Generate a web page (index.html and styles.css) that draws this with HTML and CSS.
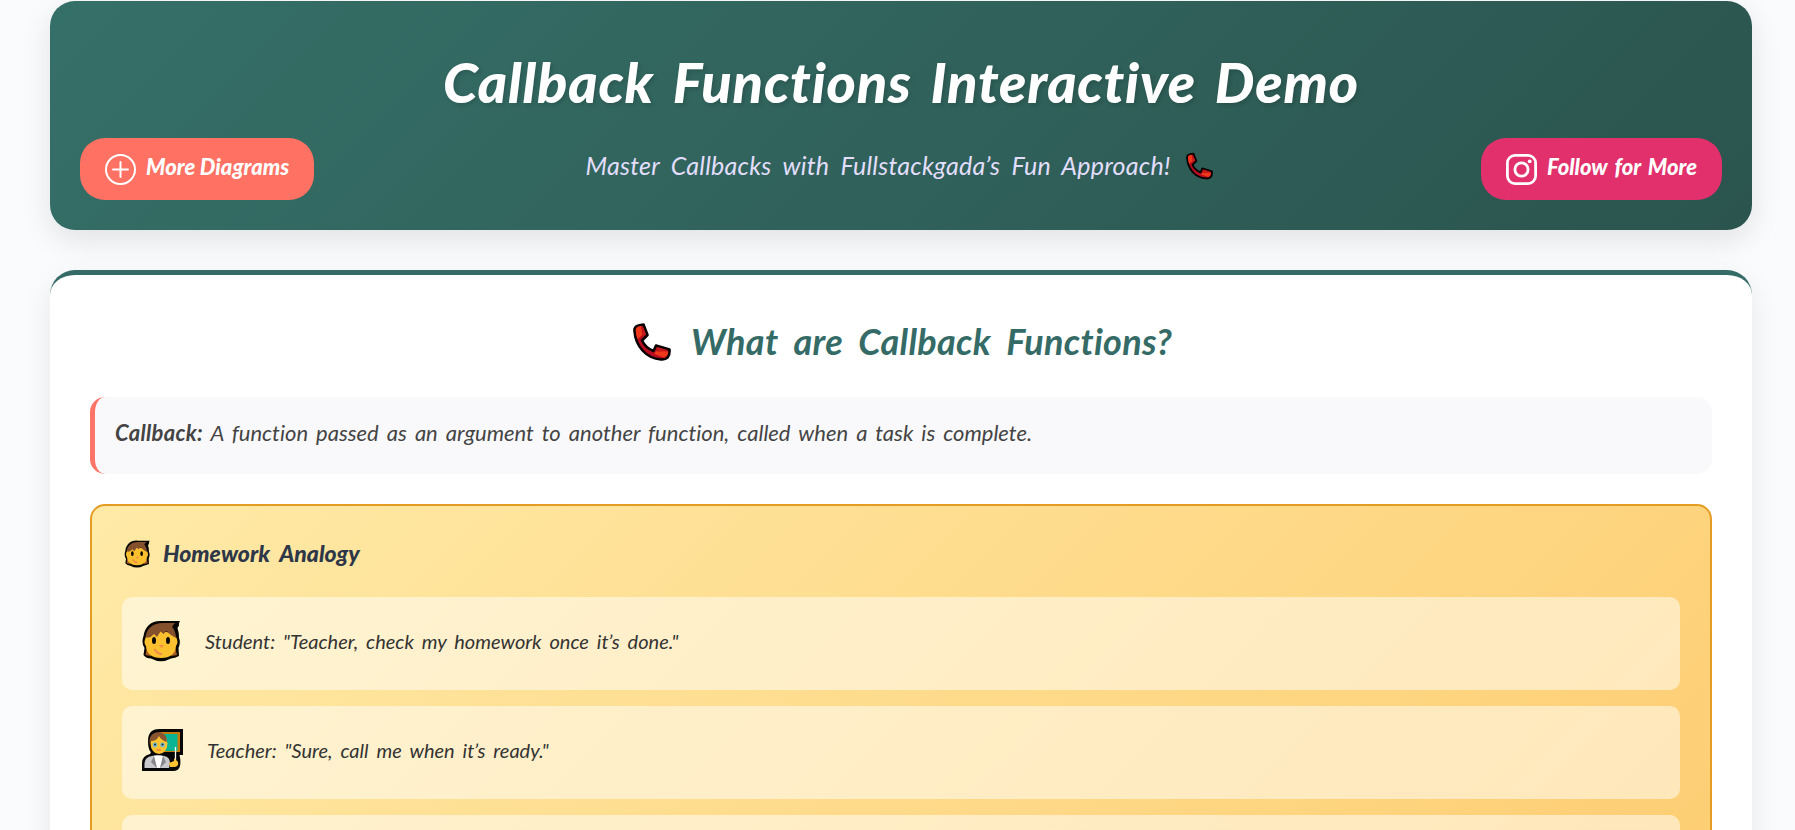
FILE: index.html
```html
<!DOCTYPE html>
<html lang="en">
<head>
<meta charset="utf-8">
<title>Callback Functions Interactive Demo</title>
<link rel="stylesheet" href="styles.css">
</head>
<body>
<svg class="defs" aria-hidden="true">
  <symbol id="phone" viewBox="0 0 38 38">
    <path d="M1.500 8C1 3 5 2 10.500 1.500L14.500 12L9 17.500C11 21.500 15 26 20.500 28L23 22.500L36.500 26.500C37 34 34 37 28 36.500C13 35.500 2.500 23 1.500 8Z" fill="#b80d1e" stroke="#080000" stroke-width="2.600" stroke-linejoin="round"/>
    <path d="M2.800 8C2.500 4 5 3.500 8 3L9.500 12L4.500 16Q3 12 2.800 8ZM23 28L35.200 28.500Q35 33 31 34.500L21.500 31Z" fill="#ef3819"/>
    <path d="M9.500 3L13 11L10 13.500ZM24 24L34.500 27L24.500 29Z" fill="#c51a1b"/>
  </symbol>
  <symbol id="student" viewBox="0 0 38 42">
    <path d="M38 1Q36.500 3.500 37 5.500L35.500 8Q37 12 37 18Q39 22 36.500 28L37 36Q33 38 29 38.500Q19 44 9 38.500Q4 38.500 1.500 35L2.500 28Q-1 23 1.500 16C3 6 10 0 20 1Z" fill="#080600"/>
    <path d="M5 27L3.500 35L9 36ZM33 27L35 35L29 36Z" fill="#a95b22"/>
    <path d="M4 17Q19 5 34 17Q37 22 34 26Q33 38 19 38Q5 38 4 26Q1 22 4 17Z" fill="#fbc02e"/>
    <path d="M3.500 17C5 8 11 3 21 3H33L30 6.500Q34 12 34 18Q29 16 24.500 11L21.500 14L18.500 11.500L15 17L12 14Q8 19 3.500 17Z" fill="#85502c"/>
    <ellipse cx="12" cy="20.500" rx="2" ry="3.500" fill="#080600"/><ellipse cx="26" cy="20.500" rx="2" ry="3.500" fill="#080600"/>
    <path d="M17 25H22L19.500 28Z" fill="#f18a4e"/><path d="M12.500 29Q15 34 20 34" fill="none" stroke="#f18a4e" stroke-width="2"/>
  </symbol>
  <symbol id="teacher" viewBox="0 0 41 42">
    <path d="M6 12Q6 0 17 0H41V26H37.500Q39 32 38 37Q37 42 31 42H0V34Q0 27 8 25L9 23Q6 21 6 12Z" fill="#070707"/>
    <path d="M18 3H38V23H18Z" fill="#c47d0d"/><path d="M20 5H35.500V22H20Z" fill="#08b493"/>
    <ellipse cx="17" cy="14.500" rx="8.500" ry="10.500" fill="#fbc231"/>
    <path d="M7.500 15Q6.500 3 18 3Q25 5 25 13Q19 11 17 7Q15 12 9 12Z" fill="#88552e"/>
    <circle cx="13" cy="16" r="2.400" fill="#79bdca"/><circle cx="20.500" cy="16" r="2.400" fill="#79bdca"/>
    <circle cx="13" cy="15.500" r="1" fill="#17272a"/><circle cx="20.500" cy="15.500" r="1" fill="#17272a"/>
    <path d="M14.500 21H19" stroke="#ed7f42" stroke-width="1.400"/>
    <path d="M2.500 39V34Q3 28 10 27Q16 25 22 27Q28 28 28 34L27 39Z" fill="#c7c9cc"/>
    <path d="M12 27L21 27L18 39H15Z" fill="#fff"/><path d="M12 27L9 33L15 39ZM21 27L24 33L18 39Z" fill="#85878a"/>
    <path d="M33.500 18V34" stroke="#fff" stroke-width="1.300"/><path d="M27 34L32 32V29L36 33Q37 38 32 38H28Z" fill="#fbc231"/>
  </symbol>
</svg>
<div class="page">
  <header class="hero">
    <h1 class="hero-title">Callback Functions Interactive Demo</h1>
    <div class="hero-row">
      <a class="pill pill-diagrams">
        <svg class="pill-icon" viewBox="0 0 31 31" fill="none" stroke="#fff" stroke-width="2"><circle cx="15.500" cy="15.500" r="14.500"/><path d="M15.500 8V23M8 15.500H23" stroke-linecap="round"/></svg>
        <span>More Diagrams</span>
      </a>
      <p class="tagline"><span>Master Callbacks with Fullstackgada’s Fun Approach!</span><svg class="tagline-icon"><use href="#phone"/></svg></p>
      <a class="pill pill-follow">
        <svg class="pill-icon" viewBox="0 0 31 31" fill="none" stroke="#fff" stroke-width="2.800"><rect x="1.400" y="1.400" width="28.200" height="28.200" rx="7.600"/><circle cx="15.500" cy="15.500" r="6.600"/><circle cx="23.700" cy="7.300" r="1.900" fill="#fff" stroke="none"/></svg>
        <span>Follow for More</span>
      </a>
    </div>
  </header>
  <main class="card">
    <h2 class="card-title"><svg class="card-icon"><use href="#phone"/></svg><span>What are Callback Functions?</span></h2>
    <p class="definition"><strong>Callback:</strong> A function passed as an argument to another function, called when a task is complete.</p>
    <section class="analogy">
      <h3 class="analogy-title"><svg class="analogy-icon"><use href="#student"/></svg><span>Homework Analogy</span></h3>
      <div class="step"><svg class="step-icon student"><use href="#student"/></svg><span>Student: "Teacher, check my homework once it’s done."</span></div>
      <div class="step"><svg class="step-icon"><use href="#teacher"/></svg><span>Teacher: "Sure, call me when it’s ready."</span></div>
      <div class="step"></div>
    </section>
  </main>
</div>
</body>
</html>
```
FILE: styles.css
```css
* { box-sizing: border-box; margin: 0; padding: 0; }
body { background: #fafbfd; font-family: Lato, "Open Sans", sans-serif; font-style: italic; font-variant-ligatures: none; color: #333; }
.defs { position: absolute; width: 0; height: 0; }
.page { height: 830px; overflow: hidden; padding: 1px 43px 0 50px; }
.hero { height: 229px; border-radius: 25px; padding: 46px 30px 30px; background: linear-gradient(135deg, #357068, #2b544e); box-shadow: 0 10px 30px rgba(0,0,0,.1); display: flex; flex-direction: column; justify-content: space-between; }
.hero-title { text-align: center; font-size: 56px; line-height: 70px; font-weight: 900; letter-spacing: .8px; word-spacing: 6px; color: #fff; text-shadow: 2px 2px 4px rgba(0,0,0,.15); }
.hero-row { display: flex; justify-content: space-between; align-items: center; }
.pill { height: 62px; border-radius: 25px; padding: 0 25px; display: flex; align-items: center; color: #fff; font-size: 22px; font-weight: 900; white-space: nowrap; line-height: 30px; }
.pill span { padding-bottom: 5px; }
.pill-icon { width: 31px; height: 31px; margin-right: 10px; flex: none; }
.pill-diagrams { width: 234px; background: #ff7163; }
.pill-follow { width: 241px; background: #e1306c; word-spacing: 2.5px; }
.tagline { display: flex; align-items: center; padding: 0 0 6px 3px; color: #e2defc; font-size: 25px; line-height: 34px; letter-spacing: .25px; word-spacing: 5px; white-space: nowrap; }
.tagline span { margin-top: -2px; }
.tagline-icon { width: 27px; height: 28px; margin-left: 15px; }
.card { margin-top: 40px; height: 1000px; border-top: 5px solid #356b66; border-radius: 25px; background: #fff; padding: 41px 40px; box-shadow: 0 10px 30px rgba(0,0,0,.08); }
.card-title { height: 50px; padding-left: 3px; display: flex; justify-content: center; align-items: center; font-size: 36px; line-height: 50px; font-weight: 700; letter-spacing: .3px; word-spacing: 7px; color: #356b66; }
.card-icon { width: 38px; height: 38px; margin: 2px 20px 0 0; }
.definition { margin-top: 31px; height: 77px; border-left: 5px solid #fd7469; border-radius: 15px; background: #f9f9fb; padding: 20px; font-size: 22px; line-height: 32px; word-spacing: 2.9px; color: #444; }
.definition strong { letter-spacing: .3px; }
.analogy { margin-top: 30px; height: 560px; border: 2px solid #e59c23; border-radius: 15px; padding: 30px; background: linear-gradient(135deg, #ffeaa7, #fdcb6e); }
.analogy-title { height: 36px; display: flex; align-items: center; font-size: 23px; line-height: 36px; font-weight: 900; word-spacing: 5px; color: #2d3748; }
.analogy-title span { padding-bottom: 3px; }
.analogy-icon { width: 26px; height: 28px; margin: 0 13px 0 2px; }
.step { margin-top: 16px; height: 93px; border-radius: 10px; padding: 23px 20px; background: rgba(255,255,255,.5); display: flex; font-size: 20px; line-height: 34px; word-spacing: 3.2px; }
.step span { padding-top: 4px; }
.analogy-title + .step { margin-top: 25px; }
.step-icon { width: 41px; height: 42px; margin-right: 24px; flex: none; }
.student { width: 38px; margin-right: 25px; }
```
